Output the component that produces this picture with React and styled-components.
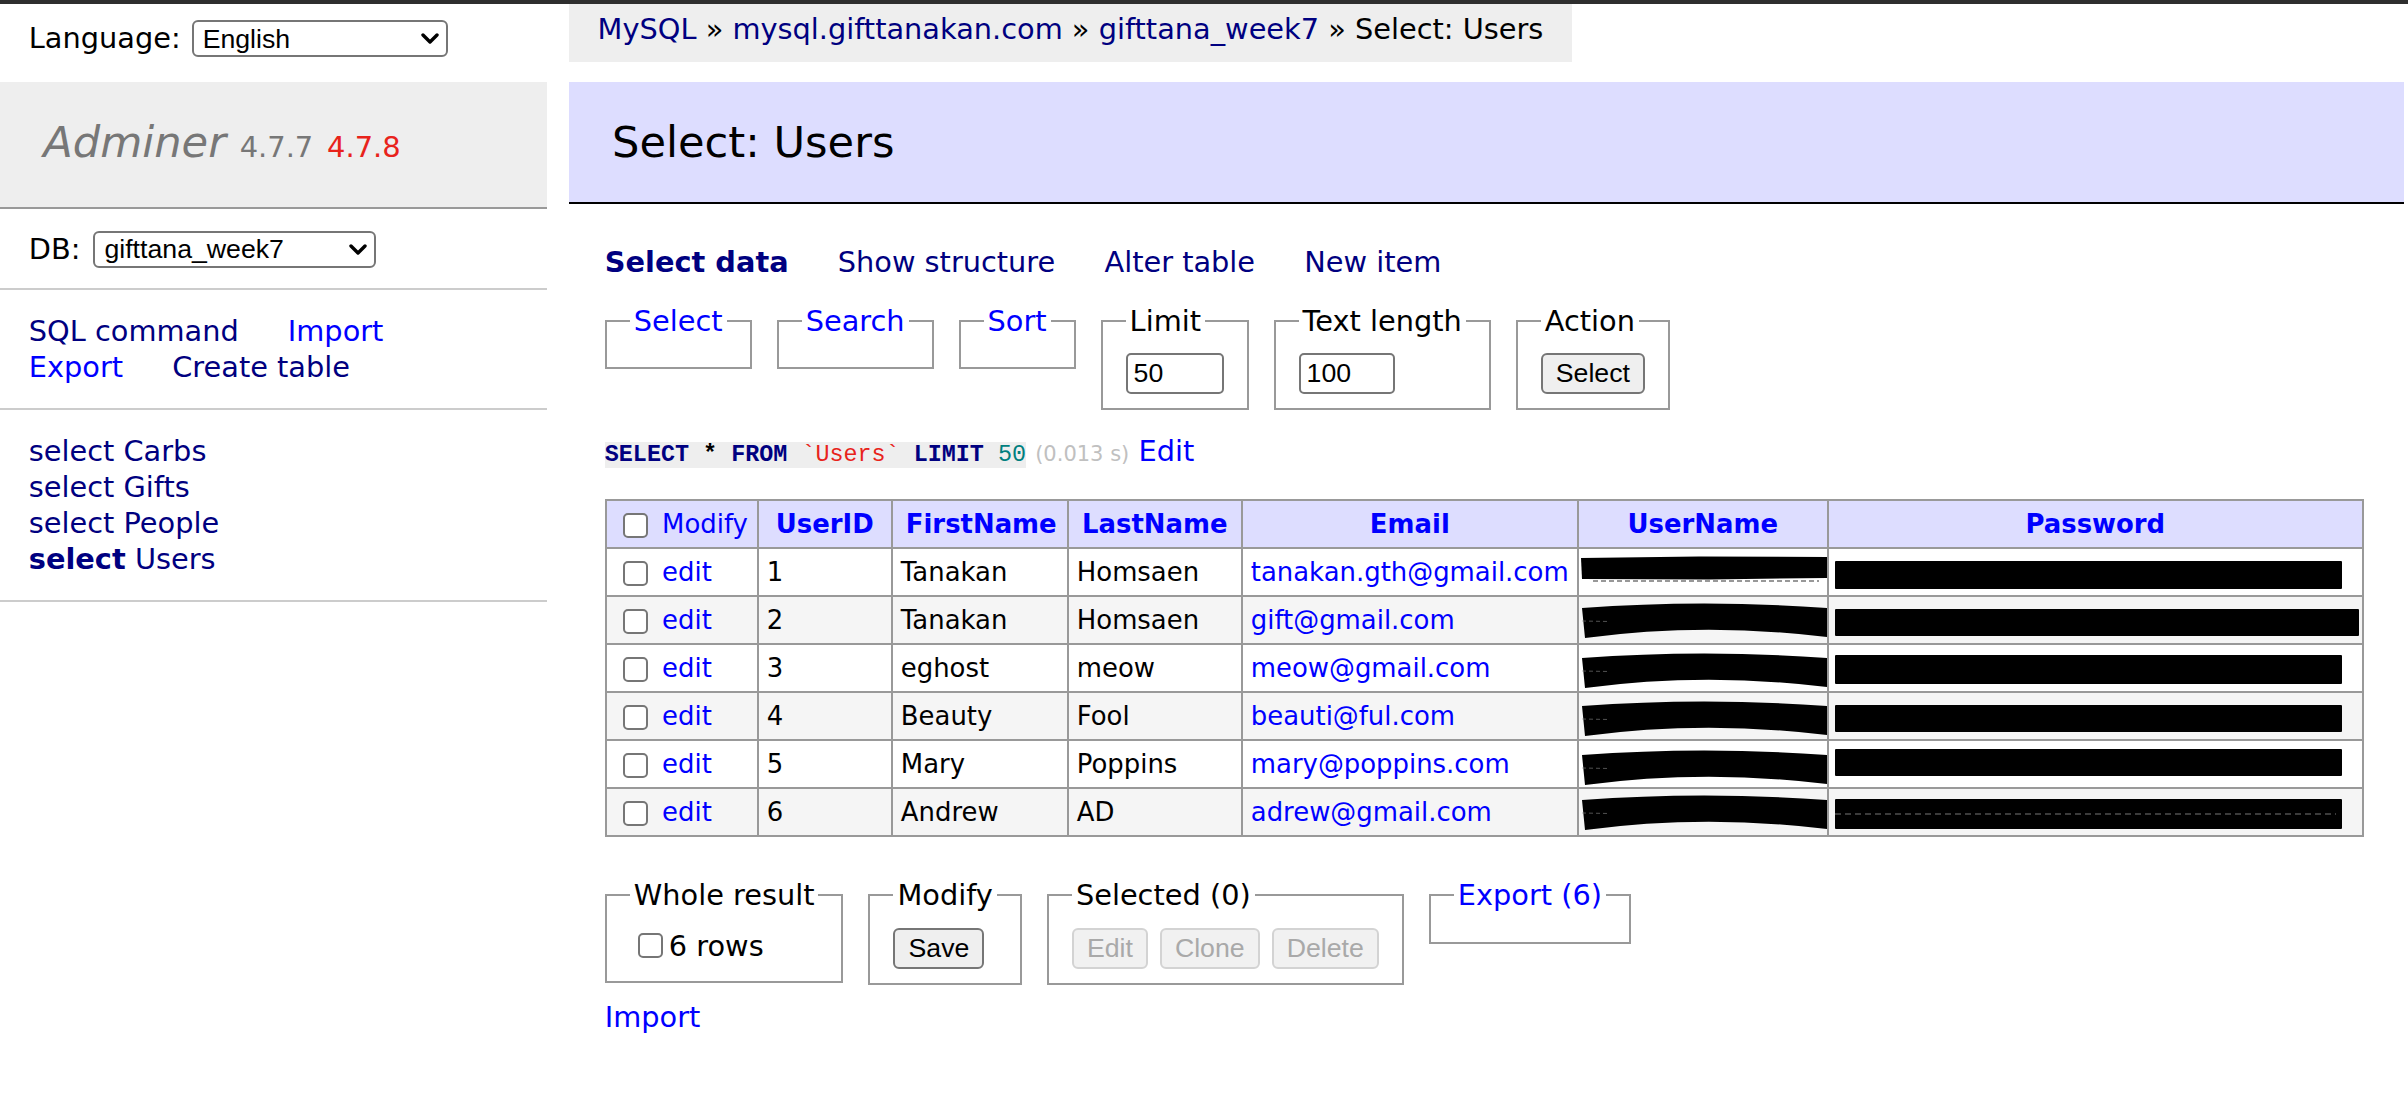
import React from "react";
import styled, { createGlobalStyle } from "styled-components";

const GlobalStyle = createGlobalStyle`
  html, body {
    margin: 0;
    padding: 0;
    background: #fff;
  }
  body {
    font-family: "DejaVu Sans", Verdana, sans-serif;
    font-size: 28.8px;
    line-height: 1.25;
    color: #000;
  }
  * {
    box-sizing: border-box;
  }
`;

const users = [
  { id: 1, first: "Tanakan", last: "Homsaen", email: "tanakan.gth@gmail.com", mark: "flat", pass: { y: 11, h: 28, w: 507 } },
  { id: 2, first: "Tanakan", last: "Homsaen", email: "gift@gmail.com", mark: 0, pass: { y: 11, h: 27, w: 524 } },
  { id: 3, first: "eghost", last: "meow", email: "meow@gmail.com", mark: 2, pass: { y: 9, h: 29, w: 507 } },
  { id: 4, first: "Beauty", last: "Fool", email: "beauti@ful.com", mark: 2, pass: { y: 11, h: 27, w: 507 } },
  { id: 5, first: "Mary", last: "Poppins", email: "mary@poppins.com", mark: 3, pass: { y: 7, h: 27, w: 507 } },
  { id: 6, first: "Andrew", last: "AD", email: "adrew@gmail.com", mark: 0, pass: { y: 9, h: 30, w: 507, seam: true } },
];

const columns = [152, 134, 176, 174, 336, 250, 535];

const App = () => {
  return (
    <>
      <GlobalStyle />
      <TopBar />
      <Page>
        <Sidebar>
          <LangRow>
            Language:
            <Dropdown width={256} value="English" />
          </LangRow>
          <Logo>
            <LogoName>Adminer</LogoName> <Version>4.7.7</Version>{" "}
            <NewVersion>4.7.8</NewVersion>
          </Logo>
          <DbRow>
            DB:
            <Dropdown width={283} value="gifttana_week7" />
          </DbRow>
          <MenuBlock>
            <div>
              <Link visited>SQL command</Link> <Link>Import</Link>
            </div>
            <div>
              <Link>Export</Link> <Link visited>Create table</Link>
            </div>
          </MenuBlock>
          <MenuBlock>
            {["Carbs", "Gifts", "People", "Users"].map((t) => (
              <TableItem key={t}>
                <NavyLink bold={t === "Users"}>select</NavyLink>{" "}
                <NavyLink>{t}</NavyLink>
              </TableItem>
            ))}
          </MenuBlock>
        </Sidebar>

        <Main>
          <Breadcrumb>
            <NavyLink>MySQL</NavyLink> » <NavyLink>mysql.gifttanakan.com</NavyLink> »{" "}
            <NavyLink>gifttana_week7</NavyLink> » Select: Users
          </Breadcrumb>
          <Heading>Select: Users</Heading>

          <Content>
            <NavLinks>
              <Link visited bold>Select data</Link> <Link visited>Show structure</Link>{" "}
              <Link visited>Alter table</Link> <Link visited>New item</Link>
            </NavLinks>

            <FieldsetRow>
              <Fieldset>
                <Legend link>Select</Legend>
              </Fieldset>
              <Fieldset>
                <Legend link>Search</Legend>
              </Fieldset>
              <Fieldset>
                <Legend link>Sort</Legend>
              </Fieldset>
              <Fieldset>
                <Legend>Limit</Legend>
                <TextInput width={98} defaultValue="50" />
              </Fieldset>
              <Fieldset>
                <Legend>Text length</Legend>
                <TextInput width={96} defaultValue="100" />
              </Fieldset>
              <Fieldset>
                <Legend>Action</Legend>
                <Button>Select</Button>
              </Fieldset>
            </FieldsetRow>

            <SqlLine>
              <Code>
                <Kw>SELECT</Kw> <Op>*</Op> <Kw>FROM</Kw> <Bac>`Users`</Bac> <Kw>LIMIT</Kw>{" "}
                <Num>50</Num>
              </Code>{" "}
              <Time>(0.013 s)</Time> <Link>Edit</Link>
            </SqlLine>

            <DataTable>
              <colgroup>
                {columns.map((w, i) => (
                  <col key={i} style={{ width: w }} />
                ))}
              </colgroup>
              <thead>
                <tr>
                  <HeadCell as="td" align="left">
                    <Check /> <Link>Modify</Link>
                  </HeadCell>
                  {["UserID", "FirstName", "LastName", "Email", "UserName", "Password"].map((h) => (
                    <HeadCell key={h}>
                      <Link bold>{h}</Link>
                    </HeadCell>
                  ))}
                </tr>
              </thead>
              <tbody>
                {users.map((u, i) => (
                  <Row key={u.id} odd={i % 2 === 1}>
                    <Cell>
                      <Check /> <Link>edit</Link>
                    </Cell>
                    <Cell>{u.id}</Cell>
                    <Cell>{u.first}</Cell>
                    <Cell>{u.last}</Cell>
                    <Cell>
                      <Link>{u.email}</Link>
                    </Cell>
                    <MarkCell>
                      <NameMark mark={u.mark} />
                    </MarkCell>
                    <MarkCell>
                      <PassMark {...u.pass} />
                    </MarkCell>
                  </Row>
                ))}
              </tbody>
            </DataTable>

            <Footer>
              <Fieldset>
                <Legend>Whole result</Legend>
                <label>
                  <Check />6 rows
                </label>
              </Fieldset>
              <Fieldset>
                <Legend>Modify</Legend>
                <Button>Save</Button>
              </Fieldset>
              <Fieldset>
                <Legend>Selected (0)</Legend>
                <ButtonGroup>
                  <Button disabled>Edit</Button>
                  <Button disabled>Clone</Button>
                  <Button disabled>Delete</Button>
                </ButtonGroup>
              </Fieldset>
              <Fieldset>
                <Legend link>Export (6)</Legend>
              </Fieldset>
            </Footer>

            <ImportLine>
              <Link>Import</Link>
            </ImportLine>
          </Content>
        </Main>
      </Page>
    </>
  );
};

export default App;

const Dropdown = ({ width, value }) => (
  <SelectWrap width={width}>
    <SelectBox defaultValue={value}>
      <option>{value}</option>
    </SelectBox>
    <ChevronIcon width="18" height="11" viewBox="0 0 18 11">
      <polyline points="2,2 9,9 16,2" fill="none" stroke="#000" strokeWidth="3.4" strokeLinecap="round" strokeLinejoin="round" />
    </ChevronIcon>
  </SelectWrap>
);

const NameMark = ({ mark }) =>
  mark === "flat" ? (
    <svg width="248" height="44" viewBox="0 0 248 44" style={{ display: "block" }}>
      <path d="M2 8 L120 6.5 L248 7 L248 28 L130 29.5 L3 29 Z" fill="#000" />
      <line x1="14" y1="31" x2="240" y2="31" stroke="#333" strokeWidth="2" strokeDasharray="5 3" opacity="0.5" />
    </svg>
  ) : (
    <svg width="248" height="44" viewBox="0 0 248 44" style={{ display: "block" }}>
      <g transform={`translate(0 ${mark})`}>
        <path d="M3 10 Q125 1 248 10 L248 39 Q125 24 6 40 Z" fill="#000" />
        <line x1="3" y1="23" x2="30" y2="23.5" stroke="#888" strokeWidth="1" strokeDasharray="4 3" opacity="0.6" />
      </g>
    </svg>
  );

const PassMark = ({ y, h, w, seam }) => (
  <svg width="533" height="44" viewBox="0 0 533 44" style={{ display: "block" }}>
    <rect x="6" y={y} width={w} height={h} rx="1" fill="#000" />
    {seam && (
      <line x1="6" y1={y + h / 2} x2={w} y2={y + h / 2} stroke="#777" strokeWidth="1" strokeDasharray="6 4" />
    )}
  </svg>
);

const TopBar = styled.div`
  height: 4px;
  background: #2e2e2e;
`;

const Page = styled.div`
  display: flex;
  align-items: flex-start;
`;

const Sidebar = styled.aside`
  width: 547px;
  flex: none;
`;

const LangRow = styled.div`
  display: flex;
  align-items: center;
  gap: 11px;
  height: 77.6px;
  padding: 8.6px 28.8px 17.2px;
  white-space: nowrap;
`;

const DbRow = styled.div`
  display: flex;
  align-items: center;
  gap: 13px;
  padding: 22px 28.8px 20px;
  line-height: 36px;
  border-bottom: 2px solid #ccc;
`;

const SelectWrap = styled.span`
  position: relative;
  display: block;
  flex: none;
  width: ${(p) => p.width}px;
  height: 37px;
`;

const SelectBox = styled.select`
  appearance: none;
  display: block;
  width: 100%;
  height: 100%;
  margin: 0;
  padding: 0 30px 0 9px;
  font-family: "Liberation Sans", Arial, sans-serif;
  font-size: 26.7px;
  color: #000;
  background: #fff;
  border: 2px solid #767676;
  border-radius: 6px;
`;

const ChevronIcon = styled.svg`
  position: absolute;
  right: 9px;
  top: 13px;
  pointer-events: none;
`;

const Logo = styled.h1`
  margin: 0;
  padding: 33px 43.2px;
  font-size: 43.2px;
  line-height: 54px;
  font-weight: normal;
  background: #eee;
  border-bottom: 2px solid #999;
  white-space: nowrap;
`;

const LogoName = styled.span`
  color: #777;
  font-style: italic;
`;

const Version = styled.span`
  color: #777;
  font-size: 67%;
`;

const NewVersion = styled.span`
  color: #e8231b;
  font-size: 67%;
`;

const MenuBlock = styled.div`
  padding: 23px 28.8px;
  line-height: 36px;
  border-bottom: 2px solid #ccc;
  white-space: nowrap;

  a {
    margin-right: 40px;
  }
`;

const TableItem = styled.div`
  line-height: 36px;

  a {
    margin-right: 0;
  }
`;

const Link = styled.a`
  color: ${(p) => (p.visited ? "#000080" : "#0000ff")};
  font-weight: ${(p) => (p.bold ? "bold" : "normal")};
  text-decoration: none;
  cursor: pointer;
`;

const NavyLink = styled.a`
  color: #000080;
  font-weight: ${(p) => (p.bold ? "bold" : "normal")};
  text-decoration: none;
`;

const Main = styled.main`
  flex: none;
  margin-left: 21.8px;
`;

const Breadcrumb = styled.div`
  width: fit-content;
  height: 57.6px;
  padding: 0 28.8px;
  line-height: 51.8px;
  background: #eee;
  white-space: nowrap;
`;

const Heading = styled.h2`
  margin: 20px 0 0;
  padding: 33px 43.2px;
  font-size: 43.2px;
  line-height: 54px;
  font-weight: normal;
  background: #ddf;
  border-bottom: 2px solid #000;
`;

const Content = styled.div`
  padding: 0 40px 40px 36px;
`;

const NavLinks = styled.p`
  margin: 40px 0 0;
  line-height: 36px;
  white-space: nowrap;

  a {
    margin-right: 40px;
  }
`;

const FieldsetRow = styled.div`
  display: flex;
  align-items: flex-start;
  gap: 25px;
  margin-top: 23px;
`;

const Fieldset = styled.fieldset`
  margin: 0;
  padding: 14.4px 23px;
  min-width: 0;
  border: 2px solid #999;
  line-height: 36px;
  white-space: nowrap;

  label {
    display: inline-flex;
    align-items: center;
  }
`;

const Legend = styled.legend`
  padding: 0 4px;
  line-height: 36px;
  color: ${(p) => (p.link ? "#0000ff" : "#000")};
`;

const TextInput = styled.input`
  display: block;
  width: ${(p) => p.width}px;
  height: 41px;
  margin: 0;
  padding: 0 6px;
  font-family: "Liberation Sans", Arial, sans-serif;
  font-size: 26.7px;
  color: #000;
  border: 2px solid #767676;
  border-radius: 5px;
`;

const Button = styled.button`
  height: 41px;
  margin: 0;
  padding: 0 13px;
  font-family: "Liberation Sans", Arial, sans-serif;
  font-size: 26.7px;
  color: ${(p) => (p.disabled ? "#a9a9a9" : "#000")};
  background: ${(p) => (p.disabled ? "#f1f1f1" : "#efefef")};
  border: 2px solid ${(p) => (p.disabled ? "#d3d3d3" : "#767676")};
  border-radius: 6px;
  vertical-align: middle;
`;

const ButtonGroup = styled.div`
  display: flex;
  gap: 12px;
`;

const Check = styled.input.attrs({ type: "checkbox" })`
  appearance: none;
  width: 25px;
  height: 25px;
  margin: 3px 6px 3px 8px;
  vertical-align: middle;
  background: #fff;
  border: 2px solid #767676;
  border-radius: 5px;
`;

const SqlLine = styled.p`
  margin: 23px 0 0;
  line-height: 36px;
  white-space: nowrap;
`;

const Code = styled.code`
  font-family: "Liberation Mono", "Courier New", monospace;
  font-size: 23.4px;
  background: #eee;
`;

const Kw = styled.span`
  color: #000080;
  font-weight: bold;
`;

const Op = styled.span`
  font-weight: bold;
`;

const Bac = styled.span`
  color: #e8231b;
`;

const Num = styled.span`
  color: #007f7f;
`;

const Time = styled.span`
  color: silver;
  font-size: 21px;
`;

const DataTable = styled.table`
  margin-top: 26px;
  width: 1757px;
  table-layout: fixed;
  border-collapse: collapse;
  font-size: 25.92px;
  line-height: 36px;
`;

const HeadCell = styled.th`
  height: 48px;
  padding: 0 ${(p) => (p.align === "left" ? "8px" : "13px")};
  text-align: ${(p) => p.align || "center"};
  background: #ddf;
  border: 2px solid #999;
  white-space: nowrap;
  overflow: hidden;
`;

const Row = styled.tr`
  height: 48px;
  background: ${(p) => (p.odd ? "#f5f5f5" : "#fff")};
`;

const Cell = styled.td`
  padding: 0 8px;
  border: 2px solid #999;
  white-space: nowrap;
  overflow: hidden;
`;

const MarkCell = styled.td`
  padding: 0;
  border: 2px solid #999;
  overflow: hidden;
`;

const Footer = styled(FieldsetRow)`
  margin-top: 40px;
`;

const ImportLine = styled.p`
  margin: 14px 0 0;
  line-height: 36px;
`;
